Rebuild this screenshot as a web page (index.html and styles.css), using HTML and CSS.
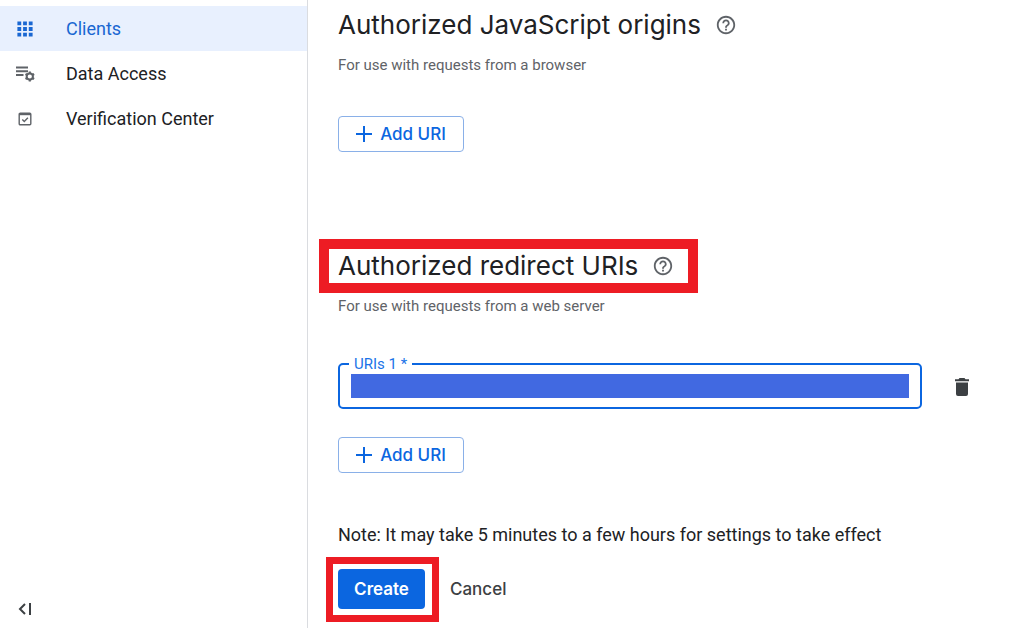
FILE: index.html
```html
<!DOCTYPE html>
<html lang="en">
<head>
<meta charset="utf-8">
<meta name="viewport" content="width=device-width, initial-scale=1">
<title>Clients</title>
<link rel="stylesheet" href="styles.css">
</head>
<body>
<svg class="symbols" aria-hidden="true">
  <symbol id="help" viewBox="0 0 24 24"><path d="M11 18h2v-2h-2v2zm1-16C6.480 2 2 6.480 2 12s4.480 10 10 10 10-4.480 10-10S17.520 2 12 2zm0 18c-4.410 0-8-3.590-8-8s3.590-8 8-8 8 3.590 8 8-3.590 8-8 8zm0-14c-2.210 0-4 1.790-4 4h2c0-1.100.9-2 2-2s2 .9 2 2c0 2-3 1.750-3 5h2c0-2.250 3-2.500 3-5 0-2.210-1.790-4-4-4z"/></symbol>
  <symbol id="plus" viewBox="0 0 16 16"><path d="M7 0h2v7h7v2H9v7H7V9H0V7h7z"/></symbol>
</svg>
<div class="page">
  <aside class="sidebar">
    <nav class="nav">
      <a class="nav-item active" href="#" aria-current="page">
        <svg class="nav-icon" viewBox="0 0 20 20"><path d="M2 2h4v4H2zM8 2h4v4H8zM14 2h4v4h-4zM2 8h4v4H2zM8 8h4v4H8zM14 8h4v4h-4zM2 14h4v4H2zM8 14h4v4H8zM14 14h4v4h-4z" transform="translate(.5 .5) scale(.95)"/></svg>
        <span>Clients</span>
      </a>
      <a class="nav-item" href="#">
        <svg class="nav-icon" viewBox="0 0 20 20"><path d="M1 2.500h12v2H1zM1 6.200h12v2H1zM1 10h7.500v2H1z"/><g fill="none" stroke="currentColor"><circle cx="14.800" cy="12.500" r="3.100" stroke-width="2"/><path d="M14.800 7.500v1.800M14.800 15.700v1.800M10.500 10l1.500.9M17.600 14.100l1.500.9M10.500 15l1.500-.9M17.600 10.900l1.500-.9" stroke-width="2.200"/></g></svg>
        <span>Data Access</span>
      </a>
      <a class="nav-item" href="#">
        <svg class="nav-icon" viewBox="0 0 20 20"><g fill="none" stroke="currentColor"><rect x="4.200" y="4.200" width="11.600" height="11.600" rx="1" stroke-width="1.400"/><path d="M4 5.200h12" stroke-width="2"/><path d="M7.300 10.400l2 2 3.600-3.600" stroke-width="1.400"/></g></svg>
        <span>Verification Center</span>
      </a>
    </nav>
    <button class="collapse" type="button" aria-label="Collapse menu">
      <svg viewBox="0 0 14 12"><path d="M7 1L2 6l5 5M12 0v12" fill="none" stroke="currentColor" stroke-width="2"/></svg>
    </button>
  </aside>
  <main class="content">
    <section class="section">
      <h2 class="title">Authorized JavaScript origins <svg class="help"><use href="#help"/></svg></h2>
      <p class="hint">For use with requests from a browser</p>
      <button class="add" type="button"><svg><use href="#plus"/></svg>Add URI</button>
    </section>
    <section class="section">
      <h2 class="title marked">Authorized redirect URIs <svg class="help"><use href="#help"/></svg></h2>
      <p class="hint">For use with requests from a web server</p>
      <div class="uri-row">
        <fieldset class="field">
          <legend><label for="uri-1">URIs 1 *</label></legend>
          <input id="uri-1" type="text" required>
        </fieldset>
        <button class="delete" type="button" aria-label="Delete URI">
          <svg viewBox="0 0 16 20"><path d="M5.500 1h5l1 1.200h3.500v2H1v-2h3.500zM2 5.500h12V17q0 2-2 2H4q-2 0-2-2z"/></svg>
        </button>
      </div>
      <button class="add" type="button"><svg><use href="#plus"/></svg>Add URI</button>
    </section>
    <p class="note">Note: It may take 5 minutes to a few hours for settings to take effect</p>
    <div class="actions">
      <span class="marked create-wrap"><button class="create" type="button">Create</button></span>
      <button class="cancel" type="button">Cancel</button>
    </div>
  </main>
</div>
</body>
</html>
```
FILE: styles.css
```css
* {
  box-sizing: border-box;
}

body {
  margin: 0;
  background: #fff;
  color: #202124;
  font-family: Roboto, sans-serif;
  font-size: 18px;
}

button {
  border: 0;
  padding: 0;
  background: none;
  font: 500 17px Inter, sans-serif;
  cursor: pointer;
}

svg {
  fill: currentColor;
  flex: none;
}

.symbols {
  display: none;
}

.page {
  display: flex;
  min-height: 100vh;
}

.sidebar {
  display: flex;
  flex-direction: column;
  justify-content: space-between;
  flex: 0 0 308px;
  padding: 6px 0 13px;
  border-right: 1px solid #dadce0;
}

.nav-item {
  display: flex;
  align-items: center;
  gap: 31px;
  height: 45px;
  padding-left: 15px;
  color: #202124;
  text-decoration: none;
}

.nav-icon {
  width: 20px;
  height: 20px;
  color: #5f6368;
}

.active {
  background: #e8f0fe;
}

.active,
.active .nav-icon {
  color: #1967d2;
}

.collapse {
  display: flex;
  align-self: flex-start;
  margin-left: 18px;
  color: #3c4043;
}

.collapse svg {
  width: 14px;
  height: 12px;
}

.content {
  flex: 1;
  min-width: 0;
  padding: 7px 42px 19px 30px;
}

.section {
  display: flex;
  flex-direction: column;
  align-items: flex-start;
}

.section + .section {
  margin-top: 96px;
}

.title {
  display: flex;
  align-items: center;
  gap: 14px;
  margin: 0;
  font: 400 26px/36px Inter, sans-serif;
}

.help {
  width: 22px;
  height: 22px;
  color: #5f6368;
}

.hint {
  margin: 12px 0 0;
  color: #5f6368;
  font-size: 15px;
  line-height: 20px;
}

.add {
  display: flex;
  align-items: center;
  justify-content: center;
  gap: 8px;
  width: 126px;
  height: 36px;
  margin-top: 41px;
  border: 1px solid #8ab0e8;
  border-radius: 4px;
  color: #0b66e0;
}

.add svg {
  width: 16px;
  height: 16px;
}

.marked {
  position: relative;
}

.marked::after {
  content: "";
  position: absolute;
  inset: -9px -24px -9px -19px;
  border: 10px solid #ed1c24;
  pointer-events: none;
}

.uri-row {
  display: flex;
  align-items: flex-end;
  gap: 20px;
  align-self: stretch;
  margin-top: 38px;
}

.field {
  flex: 1;
  min-width: 0;
  margin: 0;
  padding: 0 11px 9px;
  border: 2px solid #0b66e0;
  border-radius: 5px;
}

.field legend {
  margin-left: -2px;
  padding: 0 5px;
  color: #1a73e8;
  font-size: 15px;
  line-height: 20px;
}

.field input {
  display: block;
  width: 100%;
  height: 24px;
  border: 0;
  padding: 0 4px;
  background: #4169e1;
  color: #fff;
  font: inherit;
  outline: 0;
}

.delete {
  display: flex;
  align-items: center;
  justify-content: center;
  width: 40px;
  height: 45px;
  color: #3c4043;
}

.delete svg {
  width: 16px;
  height: 20px;
}

.uri-row + .add {
  margin-top: 28px;
}

.note {
  margin: 52px 0 24px;
  line-height: 20px;
}

.actions {
  display: flex;
  align-items: center;
  gap: 25px;
}

.create {
  display: block;
  width: 87px;
  height: 40px;
  border-radius: 4px;
  background: #0b66e0;
  color: #fff;
  font-weight: 600;
}

.create-wrap::after {
  inset: -12px -14px -13px -12px;
  border-width: 7px;
}

.cancel {
  color: #3c4043;
}
```
